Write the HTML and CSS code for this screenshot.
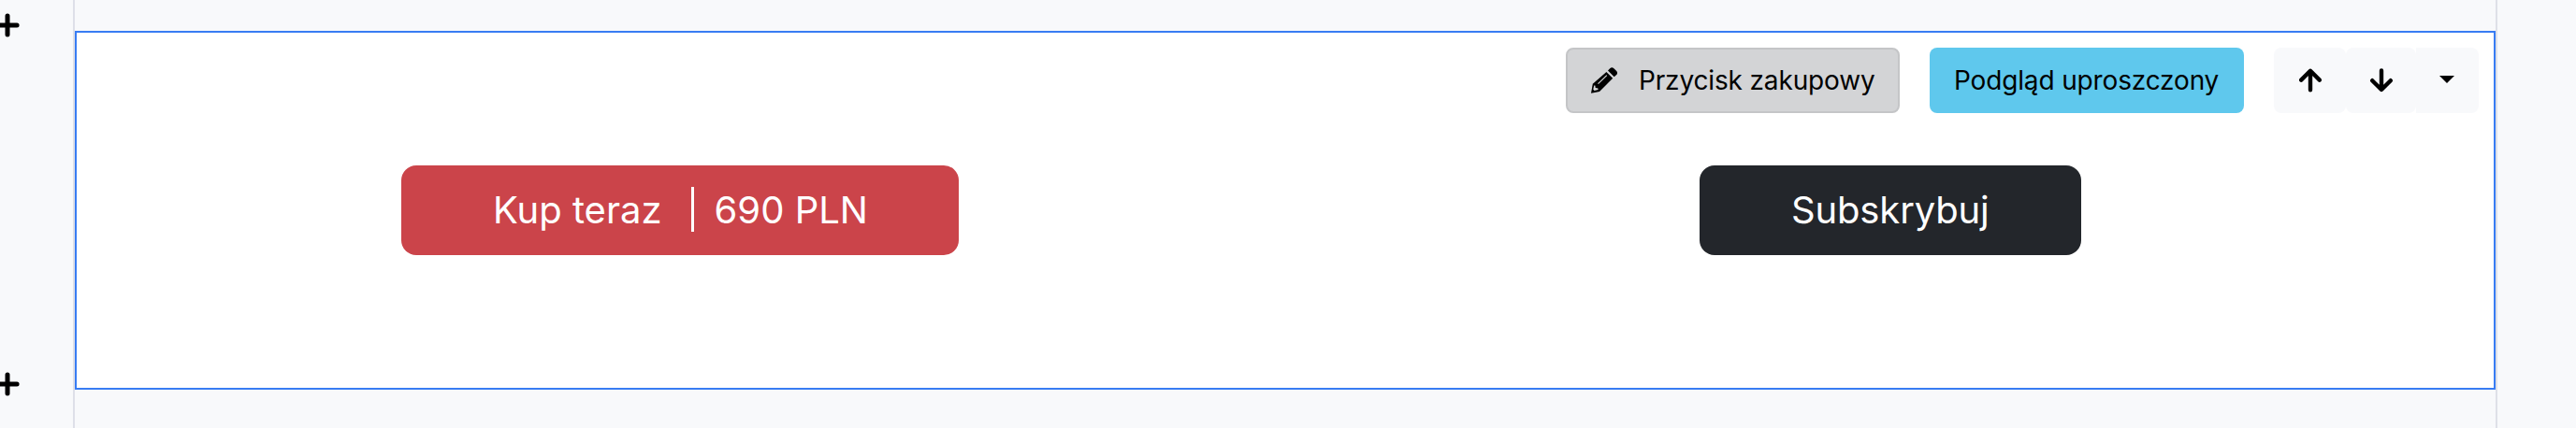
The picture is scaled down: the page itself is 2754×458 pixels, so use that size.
FILE: index.html
```html
<!DOCTYPE html>
<html lang="pl">
<head>
<meta charset="utf-8">
<title>Edytor</title>
<link rel="stylesheet" href="styles.css">
</head>
<body>
<div class="editor">
  <aside class="gutter">
    <svg class="plus" viewBox="0 0 26 26"><path d="M13 2.9v20.2M2.9 13h20.2"/></svg>
    <svg class="plus" viewBox="0 0 26 26"><path d="M13 2.9v20.2M2.9 13h20.2"/></svg>
  </aside>
  <main class="page">
    <section class="block">
      <div class="toolbar">
        <button class="btn btn-edit"><svg class="pencil" viewBox="0 0 28 28"><path d="M1.8 17.8 16.4 4.9l6.8 6.8L9 25.9 0 27.7z"/><path d="M18 3.4 20.2 1.2q2-2 4.2 0l2.8 2.8q1.8 2 0 4L24.7 10.3z"/><path class="cut" d="m7.5 17.6 9.3-9"/><path class="tip" d="m3.2 19.6 1.2 0 .3 2.5 2.7.5.2 1.5-4 1-1.3-1.3z"/></svg><span class="label label-edit">Przycisk zakupowy</span></button>
        <button class="btn btn-preview"><span class="label label-preview">Podgląd uproszczony</span></button>
        <div class="group">
          <button class="btn btn-up"><svg class="arrow" viewBox="0 0 24 26"><path d="M12 23.2V3M2.2 12.6 12 2.8l9.8 9.8"/></svg></button>
          <button class="btn btn-down"><svg class="arrow" viewBox="0 0 24 26"><path d="M12 2.5v20.2M2.2 13.2 12 23l9.8-9.8"/></svg></button>
          <button class="btn btn-more"><span class="caret"></span></button>
        </div>
      </div>
      <div class="columns">
        <div class="column"><button class="cta cta-buy"><span class="buy">Kup teraz</span><span class="divider"></span><span class="price">690 PLN</span></button></div>
        <div class="column"><button class="cta cta-subscribe"><span class="subscribe">Subskrybuj</span></button></div>
      </div>
    </section>
  </main>
</div>
</body>
</html>
```
FILE: styles.css
```css
* { box-sizing: border-box; }
body { margin: 0; background: #f8f9fb; font-family: Inter, sans-serif; color: #000; }
button { border: 0; padding: 0; font: inherit; color: inherit; }
svg { display: block; flex: none; }
.editor { display: flex; height: 458px; overflow: hidden; }
.gutter { width: 78px; flex: none; display: flex; flex-direction: column; gap: 358px; padding-top: 14px; }
.plus { width: 26px; height: 26px; margin-left: -5px; fill: none; stroke: #000; stroke-width: 5; stroke-linecap: round; }
.page { width: 2592px; flex: none; padding: 33px 0 41px; border: solid #dee0e8; border-width: 0 2px; }
.block { height: 384px; border: 2px solid #387cf3; background: #fff; }
.toolbar { display: flex; justify-content: flex-end; gap: 32px; padding: 16px 16px 0 0; }
.btn { display: flex; align-items: center; height: 70px; border-radius: 8px; font-size: 28px; white-space: nowrap; }
.btn-edit { width: 357px; padding-left: 25px; gap: 23px; border: 2px solid #c4c5c7; background: #d3d4d6; }
.pencil { width: 28px; height: 28px; }
.pencil .cut { fill: none; stroke: #d3d4d6; stroke-width: 1.2; }
.pencil .tip { fill: #d3d4d6; }
.btn-preview { width: 336px; padding-left: 26px; background: #5fc8ed; }
.label { letter-spacing: -0.15px; }
.group { display: flex; }
.group .btn { justify-content: center; background: #f8f9fb; }
.btn-up { width: 77px; }
.btn-down { width: 75px; }
.group .btn-more { width: 67px; border-radius: 0 8px 8px 0; }
.arrow { width: 24px; height: 26px; fill: none; stroke: #000; stroke-width: 4.4; stroke-linecap: round; stroke-linejoin: round; }
.caret { border: solid transparent; border-width: 8px 8px 0; border-top-color: #000; margin: -2px 1px 0 0; }
.columns { display: flex; justify-content: space-between; padding: 56px 0 0; }
.column { width: 1290px; display: flex; justify-content: center; }
.cta { display: flex; align-items: center; height: 96px; border-radius: 16px; color: #fff; font-size: 40px; white-space: nowrap; }
.cta-buy { width: 596px; padding: 0 0 2px 98px; background: #cb444a; }
.cta-subscribe { width: 408px; padding: 0 0 2px 98px; background: #23262b; }
.subscribe { letter-spacing: -0.15px; }
.divider { width: 3px; height: 48px; margin: 0 22px 0 31px; background: #fff; }
```
